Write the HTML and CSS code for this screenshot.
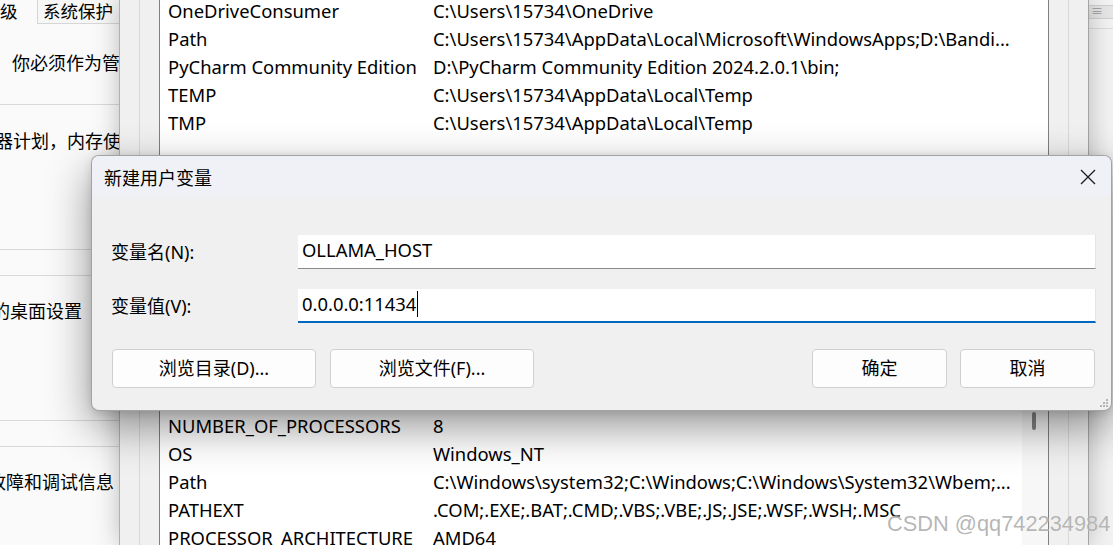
FILE: index.html
```html
<!DOCTYPE html>
<html lang="zh-CN">
<head>
  <meta charset="UTF-8" />
  <title>新建用户变量</title>
  <meta name="viewport" content="width=device-width, initial-scale=1.0" />
  <link rel="stylesheet" href="styles.css">
</head>
<body>

  <div class="escritorio">

    <!-- ventana de propiedades del sistema (detras) -->
    <div class="ventana sysprop">
      <div class="tabs">
        <span class="tab-cut">级</span>
        <span class="tab activa">系统保护</span>
      </div>
      <div class="sp-nota">你必须作为管</div>
      <div class="sp-sec"><div class="sp-txt s1">器计划，内存使用</div></div>
      <div class="sp-hueco"></div>
      <div class="sp-sec"><div class="sp-txt s2">的桌面设置</div></div>
      <div class="sp-hueco"></div>
      <div class="sp-sec"><div class="sp-txt s3">故障和调试信息</div></div>
    </div>

    <!-- ventana a la derecha -->
    <div class="ventana lateral">
      <div class="mini-boton">≡</div>
      <div class="lateral-linea"></div>
    </div>

    <!-- variables de entorno -->
    <div class="ventana envwin">
      <div class="grupo">
        <div class="lista lista-usuario">
          <div class="fila"><div>OneDriveConsumer</div><div>C:\Users\15734\OneDrive</div></div>
          <div class="fila"><div>Path</div><div>C:\Users\15734\AppData\Local\Microsoft\WindowsApps;D:\Bandi...</div></div>
          <div class="fila"><div>PyCharm Community Edition</div><div>D:\PyCharm Community Edition 2024.2.0.1\bin;</div></div>
          <div class="fila"><div>TEMP</div><div>C:\Users\15734\AppData\Local\Temp</div></div>
          <div class="fila"><div>TMP</div><div>C:\Users\15734\AppData\Local\Temp</div></div>
        </div>
        <div class="medio"></div>
        <div class="lista lista-sistema">
          <div class="filas">
            <div class="fila"><div>NUMBER_OF_PROCESSORS</div><div>8</div></div>
            <div class="fila"><div>OS</div><div>Windows_NT</div></div>
            <div class="fila"><div>Path</div><div>C:\Windows\system32;C:\Windows;C:\Windows\System32\Wbem;...</div></div>
            <div class="fila"><div>PATHEXT</div><div>.COM;.EXE;.BAT;.CMD;.VBS;.VBE;.JS;.JSE;.WSF;.WSH;.MSC</div></div>
            <div class="fila"><div>PROCESSOR_ARCHITECTURE</div><div>AMD64</div></div>
          </div>
          <div class="vscroll"><div class="thumb"></div></div>
        </div>
      </div>
    </div>

    <!-- dialogo -->
    <div class="dialogo">
      <div class="dlg-titulo">
        <span>新建用户变量</span>
        <svg class="cerrar" width="16" height="16" viewBox="0 0 16 16">
          <path d="M1 1 L15 15 M15 1 L1 15" stroke="#1b1b1b" stroke-width="1.3" fill="none" />
        </svg>
      </div>
      <div class="dlg-cuerpo">
        <div class="campo">
          <label>变量名(N):</label>
          <div class="entrada">OLLAMA_HOST</div>
        </div>
        <div class="campo">
          <label>变量值(V):</label>
          <div class="entrada activa">0.0.0.0:11434<span class="cursor"></span></div>
        </div>
        <div class="botones">
          <div class="boton ancho">浏览目录(D)...</div>
          <div class="boton ancho">浏览文件(F)...</div>
          <div class="boton corto empuje">确定</div>
          <div class="boton corto">取消</div>
        </div>
      </div>
      <svg class="agarre" width="10" height="10" viewBox="0 0 10 10">
        <rect x="7" y="1" width="2" height="2" fill="#b5b5b5" />
        <rect x="4" y="4" width="2" height="2" fill="#b5b5b5" />
        <rect x="7" y="4" width="2" height="2" fill="#b5b5b5" />
        <rect x="1" y="7" width="2" height="2" fill="#b5b5b5" />
        <rect x="4" y="7" width="2" height="2" fill="#b5b5b5" />
        <rect x="7" y="7" width="2" height="2" fill="#b5b5b5" />
      </svg>
    </div>

    <div class="marca">CSDN @qq742234984</div>
  </div>

</body>
</html>
```

FILE: styles.css
```css
* {
  box-sizing: border-box;
}

body {
  margin: 0;
  background: #f0f0f0;
  font-family: "Noto Sans", "Noto Sans CJK SC", sans-serif;
  font-size: 18px;
  color: #000;
}

.escritorio {
  position: relative;
  width: 1113px;
  height: 545px;
  overflow: hidden;
  background: #f0f0f0;
}

.ventana {
  position: absolute;
  top: 0;
  height: 545px;
}

/* ---- propiedades del sistema ---- */
.sysprop {
  left: 0;
  width: 125px;
  background: #fafafa;
  white-space: nowrap;
  overflow: hidden;
}

.tabs {
  height: 24px;
  display: flex;
  font-size: 17.5px;
  line-height: 22px;
}

.tab-cut {
  width: 37px;
}

.tab.activa {
  flex: 1;
  padding-left: 5px;
  background: #f7f7f7;
  border-left: 1px solid #d6d6d6;
  border-bottom: 1px solid #d6d6d6;
}

.sp-nota {
  height: 80px;
  padding: 25px 0 0 12px;
  line-height: 28px;
}

.sp-sec {
  height: 145px;
  border-top: 1px solid #d9d9d9;
}

.sp-hueco {
  height: 26px;
  border-top: 1px solid #d9d9d9;
}

.sp-txt {
  line-height: 28px;
  padding-top: 21px;
}

.s1 { margin-left: -5px; padding-top: 22px; }
.s2 { margin-left: -8px; }
.s3 { margin-left: -12px; }

/* ---- ventana lateral ---- */
.lateral {
  left: 1085px;
  width: 40px;
  background: #f3f3f3;
}

.mini-boton {
  margin: 5px 0 0 3px;
  width: 26px;
  height: 14px;
  background: #e6e6e6;
  border: 1px solid #cfcfcf;
  font-size: 12px;
  line-height: 11px;
  color: #9a9a9a;
  padding-left: 2px;
}

.lateral-linea {
  margin-top: 9px;
  border-top: 1px solid #dcdcdc;
}

/* ---- variables de entorno ---- */
.envwin {
  left: 119px;
  width: 970px;
  background: #f0f0f0;
  border-left: 1px solid #b0b0b0;
  border-right: 1px solid #a3a3a3;
  padding: 0 19px;
  box-shadow: 0 0 24px rgba(0, 0, 0, 0.25);
}

.grupo {
  height: 100%;
  border-left: 1px solid #d8d8d8;
  border-right: 1px solid #d8d8d8;
  padding: 0 19px;
  display: flex;
  flex-direction: column;
}

.lista {
  background: #fff;
  border-left: 1px solid #7f7f7f;
  border-right: 1px solid #7f7f7f;
}

.lista-usuario {
  margin-top: -3px;
  height: 210px;
  flex: none;
  border-bottom: 1px solid #7f7f7f;
}

.medio {
  height: 195px;
  flex: none;
}

.lista-sistema {
  flex: 1;
  display: flex;
  border-top: 1px solid #7f7f7f;
  padding-top: 9px;
}

.filas {
  flex: 1;
}

.fila {
  display: grid;
  grid-template-columns: 265px 1fr;
  height: 28px;
  line-height: 28px;
  padding-left: 8px;
  font-size: 18.4px;
  white-space: nowrap;
}

.vscroll {
  width: 26px;
  margin-top: -9px;
  background: #f7f7f7;
  position: relative;
}

.thumb {
  position: absolute;
  left: 10px;
  top: 9px;
  width: 4px;
  height: 18px;
  border-radius: 2px;
  background: #858585;
}

/* ---- dialogo ---- */
.dialogo {
  position: absolute;
  left: 91px;
  top: 155px;
  width: 1021px;
  height: 256px;
  background: #f0f0f0;
  border: 1px solid rgba(0, 0, 0, 0.32);
  border-radius: 8px;
  overflow: hidden;
  box-shadow: 0 16px 44px rgba(0, 0, 0, 0.42), 0 2px 10px rgba(0, 0, 0, 0.12);
}

.dlg-titulo {
  height: 41px;
  background: #eff1f7;
  display: flex;
  align-items: center;
  padding: 0 12px;
}

.dlg-titulo span {
  flex: 1;
}

.cerrar {
  margin-right: 3px;
}

.dlg-cuerpo {
  padding: 38px 15px 0 19px;
}

.campo {
  display: flex;
  height: 34px;
  margin-bottom: 20px;
}

.campo label {
  width: 187px;
  line-height: 34px;
}

.entrada {
  flex: 1;
  background: #fff;
  border-right: 1px solid #e4e4e4;
  border-bottom: 1px solid #8a8a8a;
  padding: 0 0 4px 4px;
  line-height: 29px;
  font-size: 18.4px;
}

.entrada.activa {
  border-bottom: 2px solid #0067c0;
}

.cursor {
  display: inline-block;
  width: 1px;
  height: 26px;
  background: #000;
  vertical-align: -6px;
  margin-left: 1px;
}

.botones {
  display: flex;
  gap: 14px;
  margin: 26px 1px 0 1px;
}

.boton {
  height: 39px;
  background: #fdfdfd;
  border: 1px solid #d0d0d0;
  border-radius: 4px;
  text-align: center;
  line-height: 37px;
}

.ancho { width: 204px; }
.corto { width: 135px; }
.empuje { margin-left: auto; margin-right: -1px; }

.agarre {
  position: absolute;
  right: 2px;
  bottom: 2px;
}

.marca {
  position: absolute;
  left: 887px;
  top: 511px;
  font-family: "Liberation Sans", sans-serif;
  font-size: 21.8px;
  color: rgba(150, 150, 150, 0.7);
  text-shadow: 0 0 1px rgba(255, 255, 255, 0.8);
  white-space: nowrap;
}
```
